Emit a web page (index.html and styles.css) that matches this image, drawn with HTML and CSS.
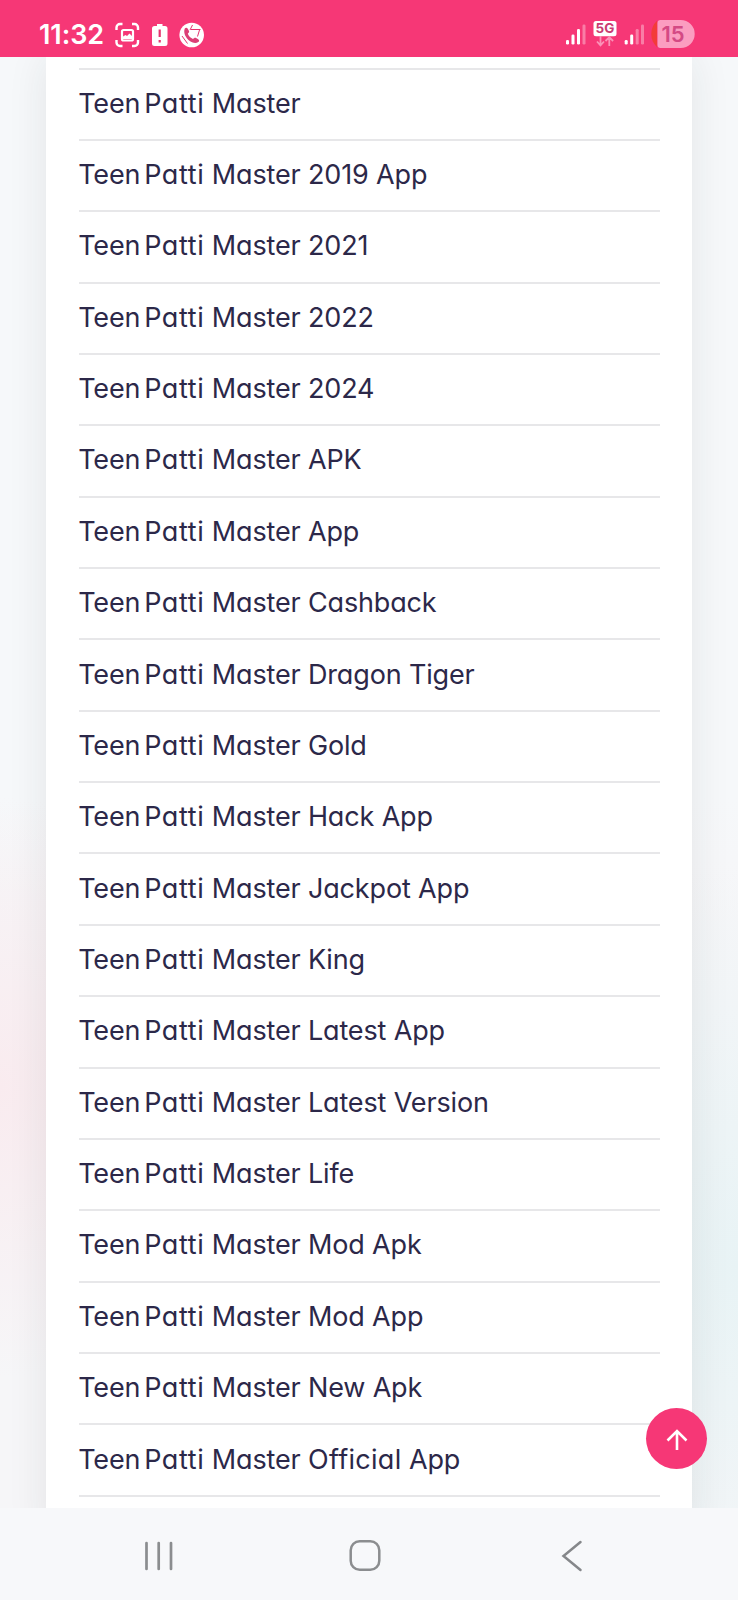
FILE: index.html
```
<!DOCTYPE html>
<html lang="en">
<head>
<meta charset="utf-8">
<meta name="viewport" content="width=device-width">
<title>Teen Patti Master</title>
<link rel="stylesheet" href="styles.css">
</head>
<body>
<div class="screen">
  <header class="status">
    <span class="clock">11:32</span>
    <svg class="status-left" width="92" height="28" viewBox="114 20 92 28" fill="none">
      <path d="M116.500 30v-2.500a3.500 3.500 0 0 1 3.500-3.500h2.500M132 24h2.500a3.500 3.500 0 0 1 3.500 3.500v2.500M138 40v2.500a3.500 3.500 0 0 1-3.500 3.500h-2.500M122.500 46h-2.500a3.500 3.500 0 0 1-3.500-3.500v-2.500" stroke="#fff" stroke-width="2.400"/>
      <rect x="122" y="30" width="11" height="10.500" rx="1.500" stroke="#fff" stroke-width="2.200"/>
      <path d="M123 39v-2.500l2.500-1.500 1.500 1 2.500-2.500 2.500 2.500v3z" fill="#fff"/>
      <path d="M157 24h5.500v2h2.500a2.500 2.500 0 0 1 2.500 2.500v15a2.500 2.500 0 0 1-2.500 2.500h-10.500a2.500 2.500 0 0 1-2.500-2.500v-15a2.500 2.500 0 0 1 2.500-2.500h2.500z" fill="#fff"/>
      <path d="M159.700 29.500v7.500M159.700 40v2.500" stroke="#e5336f" stroke-width="2.200"/>
      <circle cx="191.700" cy="35" r="12.300" fill="#fff"/>
      <path d="M184.800 28.600c.8-1.300 2.300-1 3 .2l1.200 2.200c.5 1-.4 1.800-1.200 2.700 1 2.300 2.800 4.300 5.200 5.300.9-.8 1.700-1.700 2.700-1.200l2.500 1.400c1.200.7 1.200 2.100.1 2.900-6.500 4-16.500-6.500-13.500-13.500z" fill="#dc3f76"/>
      <path d="M190 30l2.500-5M191 29.500h9.500M199.500 30l-2 6.500M182 36l5.500 7.500" stroke="#e5336f" stroke-width="1"/>
    </svg>
    <svg class="status-right" width="130" height="32" viewBox="565 18 130 32">
      <g fill="#fff"><rect x="566" y="40" width="3" height="4.500" rx="1.300"/><rect x="571.500" y="34.500" width="3" height="10" rx="1.300"/><rect x="577" y="29" width="3" height="15.500" rx="1.300"/><rect x="624.700" y="40" width="3" height="4.500" rx="1.300"/><rect x="630.200" y="34.500" width="3" height="10" rx="1.300"/></g>
      <g fill="#fff" opacity=".35"><rect x="582.500" y="24.500" width="3" height="20" rx="1.300"/><rect x="635.700" y="29" width="3" height="15.500" rx="1.300"/><rect x="641" y="24.500" width="3" height="20" rx="1.300"/></g>
      <rect x="593.500" y="21" width="23" height="15.300" rx="2.500" fill="#fff"/>
      <text class="network" x="605" y="33.300" text-anchor="middle">5G</text>
      <path d="M600.500 36v9M597 41.500l3.500 3.800 3.500-3.800M609.300 46v-8M605.500 41l3.800-3.800 3.800 3.800" fill="none" stroke="#fa93b8" stroke-width="1.800"/>
      <path d="M657 20.800a18 18 0 0 0 0 26.400z" fill="#f33b39"/>
      <path d="M657.500 23a3 3 0 0 1 3-3h20.200a14 14 0 0 1 0 28h-20.200a3 3 0 0 1-3-3z" fill="#fb9dc0"/>
      <text class="battery" x="673" y="41.800" text-anchor="middle">15</text>
    </svg>
  </header>
  <main class="page">
    <ul class="card">
      <li>Teen <span class="patti">Patti</span> Master</li>
      <li>Teen <span class="patti">Patti</span> Master 2019 App</li>
      <li>Teen <span class="patti">Patti</span> Master 2021</li>
      <li>Teen <span class="patti">Patti</span> Master 2022</li>
      <li>Teen <span class="patti">Patti</span> Master 2024</li>
      <li>Teen <span class="patti">Patti</span> Master APK</li>
      <li>Teen <span class="patti">Patti</span> Master App</li>
      <li>Teen <span class="patti">Patti</span> Master Cashback</li>
      <li>Teen <span class="patti">Patti</span> Master Dragon Tiger</li>
      <li>Teen <span class="patti">Patti</span> Master Gold</li>
      <li>Teen <span class="patti">Patti</span> Master Hack App</li>
      <li>Teen <span class="patti">Patti</span> Master Jackpot App</li>
      <li>Teen <span class="patti">Patti</span> Master King</li>
      <li>Teen <span class="patti">Patti</span> Master Latest App</li>
      <li>Teen <span class="patti">Patti</span> Master Latest Version</li>
      <li>Teen <span class="patti">Patti</span> Master Life</li>
      <li>Teen <span class="patti">Patti</span> Master Mod Apk</li>
      <li>Teen <span class="patti">Patti</span> Master Mod App</li>
      <li>Teen <span class="patti">Patti</span> Master New Apk</li>
      <li>Teen <span class="patti">Patti</span> Master <span class="official">Official</span> App</li>
    </ul>
    <button class="to-top" aria-label="Back to top">
      <svg width="24" height="24" viewBox="0 0 24 24" fill="none" stroke="#fff" stroke-width="2.600"><path d="M12 23V4M2.500 13.500L12 4l9.500 9.500"/></svg>
    </button>
  </main>
  <nav class="navbar">
    <svg width="32" height="34" viewBox="0 0 32 34" stroke="#8b8d8f" stroke-width="2.700" stroke-linecap="round"><path d="M3.500 4v26M15.700 4v26M28 4v26"/></svg>
    <svg width="34" height="34" viewBox="0 0 34 34" fill="none" stroke="#8b8d8f" stroke-width="2.500"><rect x="2.700" y="2.200" width="28.600" height="28.600" rx="9"/></svg>
    <svg width="34" height="34" viewBox="0 0 34 34" fill="none" stroke="#85878a" stroke-width="2.500" stroke-linecap="round"><path d="M26.500 3L9.500 17l17 14"/></svg>
  </nav>
</div>
</body>
</html>
```
FILE: styles.css
```
* { box-sizing: border-box; }
body { margin: 0; font-family: Inter, "Noto Sans", sans-serif; }
.screen { width: 738px; height: 1600px; display: flex; flex-direction: column; overflow: hidden; }
.status { height: 57px; flex: none; background: #f63776; display: flex; align-items: flex-start; }
.clock { margin: 18px 0 0 39px; width: 75px; color: #fff; font: 600 27px/34px Inter, sans-serif; letter-spacing: -0.1px; white-space: nowrap; }
.status-left { margin-top: 20px; }
.status-right { margin: 18px 43px 0 auto; }
.network { font: 700 13.500px Inter, sans-serif; fill: #c93b72; }
.battery { font: 600 22px Inter, sans-serif; fill: #d44a84; }
.page {
  position: relative;
  height: 1451px;
  flex: none;
  overflow: hidden;
  padding: 0 46px;
  background:
    radial-gradient(ellipse 230px 290px at 0 1030px, #f9ebef 0%, #f9ebef00 100%),
    radial-gradient(ellipse 260px 400px at 100% 1210px, #e8f3f5 0%, #e8f3f500 100%),
    linear-gradient(#f6f8fa 0 740px, #f6f6f8 860px 100%);
}
.card {
  list-style: none;
  margin: 0;
  height: 1480px;
  padding: 10.500px 32px 0 33px;
  background: #fff;
  box-shadow: 0 0 38px rgba(35, 40, 48, .09);
  color: #2c2849;
}
.card li {
  height: 71.370px;
  border-top: 2px solid #e7e7e9;
  padding-top: 16.200px;
  font-size: 27px;
  line-height: 36px;
  letter-spacing: -0.15px;
  text-indent: -0.800px;
  font-feature-settings: "cv11" 1, "ss03" 1;
  white-space: nowrap;
}
.card li:last-child { height: 73.400px; border-bottom: 2px solid #e7e7e9; }
.patti { margin-left: -3.700px; letter-spacing: 0.600px; }
.official { letter-spacing: 0.300px; }
.to-top {
  position: absolute;
  right: 31px;
  bottom: 39px;
  width: 61px;
  height: 61px;
  padding: 0;
  border: 0;
  border-radius: 50%;
  background: #f63776;
  display: grid;
  place-items: center;
}
.navbar { flex: 1; background: #f7f8fa; display: flex; align-items: center; justify-content: space-between; padding: 3px 150px 0 143px; }
```
